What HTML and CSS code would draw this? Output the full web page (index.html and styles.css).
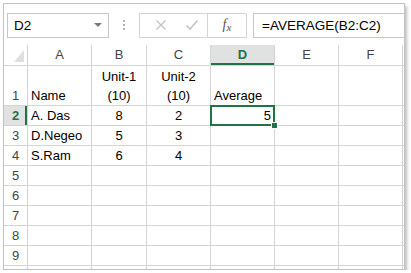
FILE: index.html
```html
<!DOCTYPE html>
<html>
<head>
  <link rel="stylesheet" href="styles.css">
</head>
<body>
  <div class="frame">
    <div class="formula-bar">
      <div class="name-box">
        <span>D2</span>
        <span class="caret"></span>
      </div>
      <div class="grip"><i></i><i></i><i></i></div>
      <div class="buttons">
        <span class="btn cancel">
          <svg width="12" height="12" viewBox="0 0 12 12"><path d="M1.5 1.5 L10.5 10.5 M10.5 1.5 L1.5 10.5" stroke="#c4c4c4" stroke-width="1.3" fill="none"/></svg>
        </span>
        <span class="btn enter">
          <svg width="14" height="12" viewBox="0 0 14 12"><path d="M1.5 6.5 L5 10 L12.5 1.5" stroke="#c4c4c4" stroke-width="1.6" fill="none"/></svg>
        </span>
        <span class="btn fx"><em>f</em><small>x</small></span>
      </div>
      <div class="formula">=AVERAGE(B2:C2)</div>
    </div>

    <div class="sheet">
      <!-- header row -->
      <div class="hdr corner"><span class="tri"></span></div>
      <div class="hdr">A</div>
      <div class="hdr">B</div>
      <div class="hdr">C</div>
      <div class="hdr sel-col">D</div>
      <div class="hdr">E</div>
      <div class="hdr">F</div>
      <div class="hdr"></div>

      <!-- row 1 -->
      <div class="rh">1</div>
      <div class="cell">Name</div>
      <div class="cell center">Unit-1<br>(10)</div>
      <div class="cell center">Unit-2<br>(10)</div>
      <div class="cell">Average</div>
      <div class="cell"></div>
      <div class="cell"></div>
      <div class="cell"></div>

      <!-- row 2 -->
      <div class="rh sel-row">2</div>
      <div class="cell">A. Das</div>
      <div class="cell center">8</div>
      <div class="cell center">2</div>
      <div class="cell right active">5</div>
      <div class="cell"></div>
      <div class="cell"></div>
      <div class="cell"></div>

      <!-- row 3 -->
      <div class="rh">3</div>
      <div class="cell">D.Negeo</div>
      <div class="cell center">5</div>
      <div class="cell center">3</div>
      <div class="cell"></div>
      <div class="cell"></div>
      <div class="cell"></div>
      <div class="cell"></div>

      <!-- row 4 -->
      <div class="rh">4</div>
      <div class="cell">S.Ram</div>
      <div class="cell center">6</div>
      <div class="cell center">4</div>
      <div class="cell"></div>
      <div class="cell"></div>
      <div class="cell"></div>
      <div class="cell"></div>

      <div class="rh">5</div><div class="cell"></div><div class="cell"></div><div class="cell"></div><div class="cell"></div><div class="cell"></div><div class="cell"></div><div class="cell"></div>
      <div class="rh">6</div><div class="cell"></div><div class="cell"></div><div class="cell"></div><div class="cell"></div><div class="cell"></div><div class="cell"></div><div class="cell"></div>
      <div class="rh">7</div><div class="cell"></div><div class="cell"></div><div class="cell"></div><div class="cell"></div><div class="cell"></div><div class="cell"></div><div class="cell"></div>
      <div class="rh">8</div><div class="cell"></div><div class="cell"></div><div class="cell"></div><div class="cell"></div><div class="cell"></div><div class="cell"></div><div class="cell"></div>
      <div class="rh">9</div><div class="cell"></div><div class="cell"></div><div class="cell"></div><div class="cell"></div><div class="cell"></div><div class="cell"></div><div class="cell"></div>
      <div class="rh"></div><div class="cell"></div><div class="cell"></div><div class="cell"></div><div class="cell"></div><div class="cell"></div><div class="cell"></div><div class="cell"></div>
    </div>
  </div>
</body>
</html>
```

FILE: styles.css
```css
/* Base */
body {
  margin: 0;
  background: #fff;
  font-family: "Liberation Sans", Arial, sans-serif;
  font-size: 13px;
  color: #000;
}

.frame {
  margin: 3px 0 0 3px;
  width: 400px;
  height: 265px;
  border: 1px solid #c2c2c2;
  box-shadow: 2px 3px 3px rgba(0, 0, 0, 0.25);
  overflow: hidden;
  background: #fff;
}

/* Formula bar */
.formula-bar {
  display: flex;
  align-items: center;
  height: 41px;
  padding-top: 1px;
  box-sizing: border-box;
}

.name-box {
  margin-left: 3px;
  width: 102px;
  height: 25px;
  border: 1px solid #c6c6c6;
  box-sizing: border-box;
  display: flex;
  align-items: center;
  justify-content: space-between;
  padding: 0 6px 0 6px;
  font-size: 13.5px;
}

.caret {
  width: 0;
  height: 0;
  border-left: 4px solid transparent;
  border-right: 4px solid transparent;
  border-top: 4px solid #7a7a7a;
}

.grip {
  width: 30px;
  display: flex;
  flex-direction: column;
  align-items: center;
  gap: 2px;
}

.grip i {
  width: 2px;
  height: 2px;
  background: #b3b3b3;
}

.buttons {
  width: 108px;
  height: 25px;
  border: 1px solid #d4d4d4;
  box-sizing: border-box;
  display: flex;
  align-items: center;
}

.btn {
  display: flex;
  align-items: center;
  justify-content: center;
  width: 32px;
}

.btn.cancel {
  margin-left: 6px;
}

.btn.fx {
  margin-left: auto;
  width: 41px;
  height: 23px;
  border-left: 1px solid #d4d4d4;
  box-sizing: border-box;
  color: #555;
  font-family: "Liberation Serif", serif;
  font-size: 14px;
}

.btn.fx small {
  font-style: italic;
  font-size: 11px;
  margin-top: 3px;
}

.formula {
  margin-left: 6px;
  flex: 1;
  height: 25px;
  line-height: 23px;
  border: 1px solid #c6c6c6;
  border-right: none;
  box-sizing: border-box;
  padding-left: 8px;
  font-size: 13.5px;
}

/* Grid */
.sheet {
  display: grid;
  grid-template-columns: 23px 63px 54px 63px 63px 63px 63px 1px;
  grid-template-rows: 20px 39px repeat(8, 19px) 3px;
  gap: 1px;
  background: #d4d4d4;
}

.hdr {
  background: #fff;
  color: #444;
  text-align: center;
  line-height: 20px;
  position: relative;
}

.tri {
  position: absolute;
  right: 3px;
  bottom: 3px;
  width: 0;
  height: 0;
  border-left: 10px solid transparent;
  border-bottom: 12px solid #dfdfdf;
}

.sel-col {
  background: #e1e1e1;
  color: #217346;
  font-weight: bold;
  box-shadow: inset 0 -2px 0 #217346;
}

.rh {
  background: #fff;
  color: #444;
  display: flex;
  align-items: flex-end;
  justify-content: center;
  line-height: 19px;
}

.sel-row {
  background: #e1e1e1;
  color: #217346;
  font-weight: bold;
  box-shadow: inset -2px 0 0 #217346;
}

.cell {
  background: #fff;
  display: flex;
  align-items: flex-end;
  padding: 0 3px;
  line-height: 19px;
  white-space: nowrap;
  position: relative;
}

.cell.center {
  justify-content: center;
  text-align: center;
}

.cell.right {
  justify-content: flex-end;
}

.cell.active {
  box-shadow: 0 0 0 1px #217346, inset 0 0 0 1px #217346;
  z-index: 1;
}

.cell.active::after {
  content: '';
  position: absolute;
  right: -4px;
  bottom: -4px;
  width: 5px;
  height: 5px;
  background: #217346;
  border: 1px solid #fff;
}
```
